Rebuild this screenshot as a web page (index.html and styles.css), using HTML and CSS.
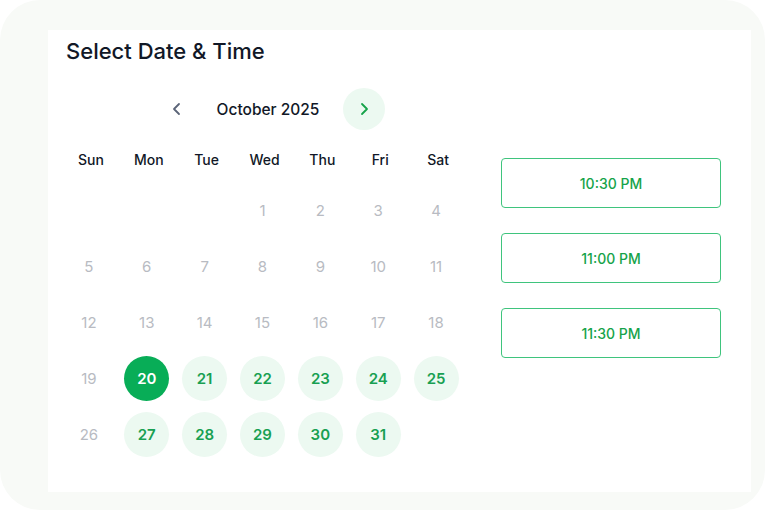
FILE: index.html
```html
<!DOCTYPE html>
<html>
<head>
<meta charset="utf-8">
<link rel="stylesheet" href="styles.css">
</head>
<body>
<div class="outer">
  <div class="panel">
    <h1 class="title">Select Date &amp; Time</h1>
    <div class="body">
      <div class="calendar">
        <div class="nav">
          <button class="navbtn prev" aria-label="Previous month">
            <svg width="16" height="16" viewBox="0 0 16 16"><path d="M10 3 L5 8 L10 13" fill="none" stroke="#5b6478" stroke-width="1.8" stroke-linecap="round" stroke-linejoin="round"/></svg>
          </button>
          <div class="month">October 2025</div>
          <button class="navbtn next" aria-label="Next month">
            <svg width="16" height="16" viewBox="0 0 16 16"><path d="M6 3 L11 8 L6 13" fill="none" stroke="#16a34a" stroke-width="1.8" stroke-linecap="round" stroke-linejoin="round"/></svg>
          </button>
        </div>
        <div class="grid weekdays">
          <div class="wd">Sun</div><div class="wd">Mon</div><div class="wd">Tue</div><div class="wd">Wed</div><div class="wd">Thu</div><div class="wd">Fri</div><div class="wd">Sat</div>
        </div>
        <div class="grid days">
          <div class="cell"></div><div class="cell"></div><div class="cell"></div>
          <div class="cell"><span class="d off">1</span></div>
          <div class="cell"><span class="d off">2</span></div>
          <div class="cell"><span class="d off">3</span></div>
          <div class="cell"><span class="d off">4</span></div>
          <div class="cell"><span class="d off">5</span></div>
          <div class="cell"><span class="d off">6</span></div>
          <div class="cell"><span class="d off">7</span></div>
          <div class="cell"><span class="d off">8</span></div>
          <div class="cell"><span class="d off">9</span></div>
          <div class="cell"><span class="d off">10</span></div>
          <div class="cell"><span class="d off">11</span></div>
          <div class="cell"><span class="d off">12</span></div>
          <div class="cell"><span class="d off">13</span></div>
          <div class="cell"><span class="d off">14</span></div>
          <div class="cell"><span class="d off">15</span></div>
          <div class="cell"><span class="d off">16</span></div>
          <div class="cell"><span class="d off">17</span></div>
          <div class="cell"><span class="d off">18</span></div>
          <div class="cell"><span class="d off">19</span></div>
          <div class="cell"><span class="d sel">20</span></div>
          <div class="cell"><span class="d on">21</span></div>
          <div class="cell"><span class="d on">22</span></div>
          <div class="cell"><span class="d on">23</span></div>
          <div class="cell"><span class="d on">24</span></div>
          <div class="cell"><span class="d on">25</span></div>
          <div class="cell"><span class="d off">26</span></div>
          <div class="cell"><span class="d on">27</span></div>
          <div class="cell"><span class="d on">28</span></div>
          <div class="cell"><span class="d on">29</span></div>
          <div class="cell"><span class="d on">30</span></div>
          <div class="cell"><span class="d on">31</span></div>
        </div>
      </div>
      <div class="times">
        <button class="slot">10:30 PM</button>
        <button class="slot">11:00 PM</button>
        <button class="slot">11:30 PM</button>
      </div>
    </div>
  </div>
</div>
</body>
</html>
```
FILE: styles.css
```css
* { box-sizing: border-box; }
html, body { margin: 0; padding: 0; background: #ffffff; }
body { font-family: Inter, "Noto Sans", sans-serif; }

.outer {
  width: 765px;
  height: 510px;
  background: #f8faf7;
  border-radius: 40px;
  padding: 30px 14px 18px 48px;
}
.panel {
  background: #ffffff;
  height: 100%;
  padding: 8px 30px 0 14px;
}
.title {
  margin: 0 0 0 4px;
  font-size: 22px;
  line-height: 26px;
  font-weight: 500;
  color: #111827;
}
.body {
  display: flex;
  gap: 34px;
  margin-top: 24px;
}
.calendar { width: 405px; }
.nav {
  display: flex;
  align-items: center;
  justify-content: center;
  gap: 19px;
  height: 42px;
  padding-left: 12px;
}
.navbtn {
  width: 42px;
  height: 42px;
  border-radius: 50%;
  border: none;
  background: transparent;
  display: flex;
  align-items: center;
  justify-content: center;
  padding: 0;
}
.navbtn.next { background: #ecf9f1; }
.month {
  font-size: 15.5px;
  font-weight: 500;
  color: #111827;
  margin-right: 5px;
}
.grid {
  display: grid;
  grid-template-columns: repeat(7, 1fr);
}
.weekdays { margin-top: 15px; height: 28px; }
.wd {
  display: flex;
  align-items: center;
  justify-content: center;
  font-size: 14px;
  font-weight: 500;
  color: #111827;
}
.days { margin: 9px 2px 0 -2px; grid-auto-rows: 56px; }
.cell {
  display: flex;
  align-items: center;
  justify-content: center;
}
.d {
  width: 45px;
  height: 45px;
  border-radius: 50%;
  display: flex;
  align-items: center;
  justify-content: center;
  font-size: 15px;
}
.d.off { color: #b8bbc2; font-weight: 400; }
.d.on { background: #ecf9f1; color: #18a052; font-weight: 600; }
.d.sel { background: #08ad57; color: #ffffff; font-weight: 600; }

.times {
  width: 220px;
  display: flex;
  flex-direction: column;
  gap: 25px;
  padding-top: 70px;
}
.slot {
  height: 50px;
  border: 1px solid #3fc47d;
  border-radius: 4px;
  background: #ffffff;
  color: #16a34a;
  font-family: Inter, "Noto Sans", sans-serif;
  font-size: 14px;
  font-weight: 500;
}
```
